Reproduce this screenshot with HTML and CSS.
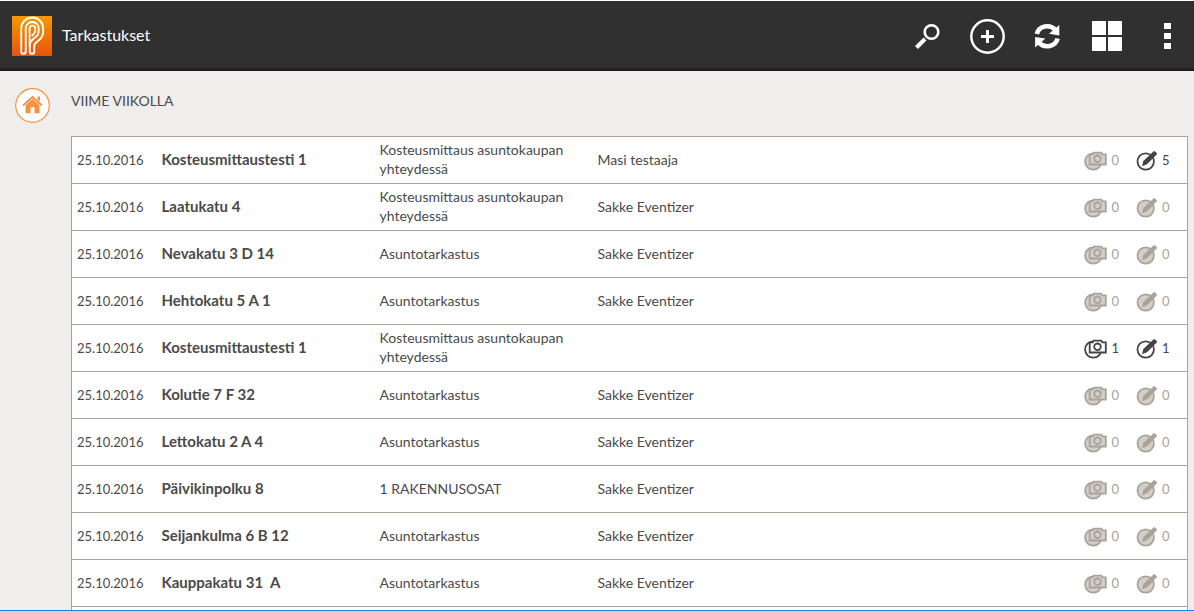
FILE: index.html
```html
<!DOCTYPE html>
<html lang="fi">
<head>
<meta charset="utf-8">
<title>Tarkastukset</title>
<link rel="stylesheet" href="styles.css">
</head>
<body>
<svg class="sprite" aria-hidden="true">
  <defs>
    <symbol id="photos" viewBox="0 0 24 22">
      <circle class="disc" cx="9.3" cy="12.5" r="8.2"/>
      <path class="disc" d="M5.7 5.3h3l1-1.6h7.6l1 1.6h3.5v10.2H5.700z"/>
      <circle class="disc" cx="13.500" cy="9.800" r="3.300"/>
    </symbol>
    <symbol id="notes" viewBox="0 0 22 22">
      <circle class="disc" cx="9.7" cy="12.5" r="8.2"/>
      <path class="solid" d="M6 17.3l1.3-5.2L17.4 2.4q.8-.7 1.6 0l1.7 1.6q.7.8 0 1.5L11 15.3z"/>
    </symbol>
  </defs>
</svg>
<div class="app">
  <header class="topbar">
    <svg class="logo" viewBox="0 0 40 40" role="img" aria-label="P">
      <defs><linearGradient id="flame" gradientUnits="userSpaceOnUse" x1="0" y1="0" x2="0" y2="40"><stop offset="0" stop-color="#f59a00"/><stop offset="1" stop-color="#e9530e"/></linearGradient></defs>
      <rect width="40" height="40" fill="url(#flame)"/>
      <g fill="none" stroke-linecap="round" stroke-linejoin="round">
        <path stroke="#fff" stroke-width="6.4" d="M11.5 35.5V12.5a8.7 8.7 0 0 1 17.4 0v3q0 4-3 6.5l-3.5 3q-2.4 2-2.4 5v5.5"/>
        <path stroke="url(#flame)" stroke-width="2.6" d="M11.5 35.5V12.5a8.7 8.7 0 0 1 17.4 0v3q0 4-3 6.5l-3.5 3q-2.4 2-2.4 5v5.5"/>
        <path stroke="#fff" stroke-width="1.8" d="M17.6 30V12.5a2.8 2.8 0 0 1 5.6 0v2.5q0 2-2 3.5l-1 1"/>
      </g>
    </svg>
    <h1 class="title">Tarkastukset</h1>
    <nav class="actions">
      <button class="action" aria-label="Hae"><svg viewBox="0 0 40 40"><circle cx="24.5" cy="16" r="6.8" fill="none" stroke="#fff" stroke-width="2.6"/><path d="M18 23l-8.5 8.5" stroke="#fff" stroke-width="4"/></svg></button>
      <button class="action" aria-label="Lisää"><svg viewBox="0 0 40 40"><circle cx="20.5" cy="20.5" r="16.2" fill="none" stroke="#fff" stroke-width="2.4"/><path d="M20.5 14v13M14 20.5h13" stroke="#fff" stroke-width="3"/></svg></button>
      <button class="action" aria-label="Päivitä"><svg viewBox="0 0 40 40"><g id="arc"><path d="M9.800 18A10.6 9.8 0 0 1 28.5 14" fill="none" stroke="#fff" stroke-width="4.6"/><path d="M32.3 9v10.500L22 17.800z" fill="#fff"/></g><use href="#arc" transform="rotate(180 20.2 20.2)"/></svg></button>
      <button class="action" aria-label="Ruudukko"><svg viewBox="0 0 40 40"><path d="M5 5h14v14H5zM21 5h14v14H21zM5 21h14v14H5zM21 21h14v14H21z" fill="#fff"/></svg></button>
      <button class="action" aria-label="Valikko"><svg viewBox="0 0 40 40"><path d="M17 7h7v6h-7zM17 17h7v6h-7zM17 27h7v6h-7z" fill="#fff"/></svg></button>
    </nav>
  </header>
  <main class="content">
    <a class="home" href="#" aria-label="Etusivu"><svg viewBox="0 0 36 36"><circle cx="18.5" cy="18.5" r="16.8" fill="#fff" stroke="#f59144" stroke-width="1.2"/><path d="M9 18.5l9.5-8.5 9.5 8.5" fill="none" stroke="#f59144" stroke-width="1.8"/><path d="M23.5 9.5H26v5L23.5 12.5zM18.5 12l7 6.3v8h-5v-6h-4v6h-5v-8z" fill="#f59144"/></svg></a>
    <section class="week">
      <h2 class="heading">VIIME VIIKOLLA</h2>
      <table class="list">
        <colgroup><col class="col-date"><col class="col-name"><col class="col-type"><col><col class="col-counts"></colgroup>
        <tbody>
          <tr><td class="date">25.10.2016</td><td class="name">Kosteusmittaustesti 1</td><td>Kosteusmittaus asuntokaupan yhteydessä</td><td>Masi testaaja</td><td><div class="counts"><span class="count"><svg class="photos"><use href="#photos"/></svg>0</span><span class="count on"><svg class="notes"><use href="#notes"/></svg>5</span></div></td></tr>
          <tr><td class="date">25.10.2016</td><td class="name">Laatukatu 4</td><td>Kosteusmittaus asuntokaupan yhteydessä</td><td>Sakke Eventizer</td><td><div class="counts"><span class="count"><svg class="photos"><use href="#photos"/></svg>0</span><span class="count"><svg class="notes"><use href="#notes"/></svg>0</span></div></td></tr>
          <tr><td class="date">25.10.2016</td><td class="name">Nevakatu 3 D 14</td><td>Asuntotarkastus</td><td>Sakke Eventizer</td><td><div class="counts"><span class="count"><svg class="photos"><use href="#photos"/></svg>0</span><span class="count"><svg class="notes"><use href="#notes"/></svg>0</span></div></td></tr>
          <tr><td class="date">25.10.2016</td><td class="name">Hehtokatu 5 A 1</td><td>Asuntotarkastus</td><td>Sakke Eventizer</td><td><div class="counts"><span class="count"><svg class="photos"><use href="#photos"/></svg>0</span><span class="count"><svg class="notes"><use href="#notes"/></svg>0</span></div></td></tr>
          <tr><td class="date">25.10.2016</td><td class="name">Kosteusmittaustesti 1</td><td>Kosteusmittaus asuntokaupan yhteydessä</td><td></td><td><div class="counts"><span class="count on"><svg class="photos"><use href="#photos"/></svg>1</span><span class="count on"><svg class="notes"><use href="#notes"/></svg>1</span></div></td></tr>
          <tr><td class="date">25.10.2016</td><td class="name">Kolutie 7 F 32</td><td>Asuntotarkastus</td><td>Sakke Eventizer</td><td><div class="counts"><span class="count"><svg class="photos"><use href="#photos"/></svg>0</span><span class="count"><svg class="notes"><use href="#notes"/></svg>0</span></div></td></tr>
          <tr><td class="date">25.10.2016</td><td class="name">Lettokatu 2 A 4</td><td>Asuntotarkastus</td><td>Sakke Eventizer</td><td><div class="counts"><span class="count"><svg class="photos"><use href="#photos"/></svg>0</span><span class="count"><svg class="notes"><use href="#notes"/></svg>0</span></div></td></tr>
          <tr><td class="date">25.10.2016</td><td class="name">Päivikinpolku 8</td><td>1 RAKENNUSOSAT</td><td>Sakke Eventizer</td><td><div class="counts"><span class="count"><svg class="photos"><use href="#photos"/></svg>0</span><span class="count"><svg class="notes"><use href="#notes"/></svg>0</span></div></td></tr>
          <tr><td class="date">25.10.2016</td><td class="name">Seijankulma 6 B 12</td><td>Asuntotarkastus</td><td>Sakke Eventizer</td><td><div class="counts"><span class="count"><svg class="photos"><use href="#photos"/></svg>0</span><span class="count"><svg class="notes"><use href="#notes"/></svg>0</span></div></td></tr>
          <tr><td class="date">25.10.2016</td><td class="name">Kauppakatu 31&nbsp; A</td><td>Asuntotarkastus</td><td>Sakke Eventizer</td><td><div class="counts"><span class="count"><svg class="photos"><use href="#photos"/></svg>0</span><span class="count"><svg class="notes"><use href="#notes"/></svg>0</span></div></td></tr>
          <tr><td></td><td></td><td></td><td></td><td></td></tr>
        </tbody>
      </table>
    </section>
  </main>
</div>
</body>
</html>
```
FILE: styles.css
```css
* { box-sizing: border-box; }
body { margin: 0; font: 14px/19px Lato, "Noto Sans", sans-serif; color: #4a4a4a; background: #efeeec; }
.sprite { display: none; }
.app { height: 100vh; display: flex; flex-direction: column; border-top: 1px solid #fff; border-bottom: 1px solid #1883d7; }
.topbar { flex: none; height: 70px; padding: 0 7px 0 12px; display: flex; align-items: center; background: linear-gradient(#303030 66px, #181414); }
.logo { width: 40px; height: 40px; }
.title { margin: 0 0 0 10px; padding-bottom: 4px; font-size: 16px; font-weight: 400; color: #fff; }
.actions { margin-left: auto; display: flex; gap: 20px; }
.action { width: 40px; height: 40px; padding: 0; border: 0; background: none; }
.action svg { display: block; }
.content { flex: 1; min-height: 0; overflow: hidden; display: flex; gap: 21px; padding: 16px 6px 0 14px; }
.home { flex: none; width: 36px; height: 36px; }
.home svg { display: block; }
.week { flex: 1; padding-top: 4px; }
.heading { margin: 0 0 26px; font-size: 14px; line-height: 19px; font-weight: 400; }
.list { width: 100%; table-layout: fixed; border-collapse: collapse; background: #fff; border: 1px solid #a9a39b; }
.list tr { height: 47px; border-bottom: 1px solid #a9a39b; }
.list td { padding: 0 16px 2px 5px; }
.col-date { width: 85px; }
.col-name, .col-type { width: 218px; }
.col-counts { width: 109px; }
.list .date { padding: 0 0 0 5px; font-size: 13px; }
.list .name { padding-right: 0; font-size: 15px; font-weight: 700; }
.list td:last-child { padding: 0 0 0 5px; }
.counts { display: flex; gap: 17px; font-size: 13px; }
.count { --line: #a9a39b; --fill: #d3cec8; display: flex; align-items: center; gap: 4px; color: var(--line); }
.count.on { --line: #444; --fill: #fff; }
.photos { width: 24px; height: 22px; }
.notes { width: 22px; height: 22px; }
.disc { fill: var(--fill); stroke: var(--line); stroke-width: 1.8; }
.solid { fill: var(--line); }
```
